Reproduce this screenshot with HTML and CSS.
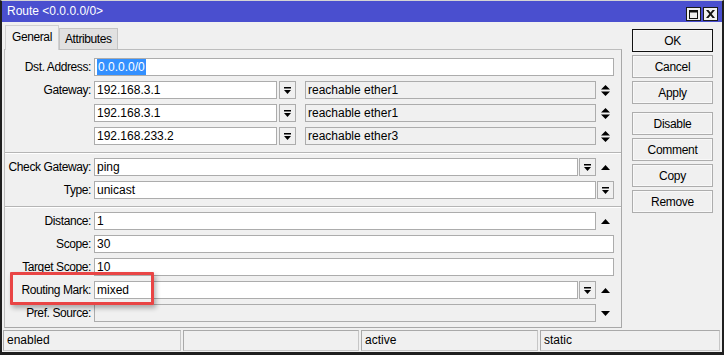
FILE: index.html
```html
<!DOCTYPE html>
<html lang="en">

<head>
    <meta charset="UTF-8">
    <meta name="viewport" content="width=device-width, initial-scale=1.0">
    <title>Route &lt;0.0.0.0/0&gt;</title>
    <link rel="stylesheet" href="styles.css">
</head>

<body>
    <div class="window">
        <!-- title bar -->
        <div class="titlebar">
            <span class="title">Route &lt;0.0.0.0/0&gt;</span>
            <div class="title-buttons">
                <span class="tbtn">
                    <svg width="9" height="9" viewBox="0 0 9 9"><path d="M0 0h9v9H0z M1 2.5v5.5h7V2.5z" fill-rule="evenodd" /></svg>
                </span>
                <span class="tbtn">
                    <svg width="9" height="8" viewBox="0 0 9 8"><path d="M0 0h2.4l2.1 2.6L6.6 0H9L5.7 4 9 8H6.6L4.5 5.4 2.4 8H0l3.3-4z" /></svg>
                </span>
            </div>
        </div>

        <div class="main">
            <div class="tabarea">
                <div class="tabs">
                    <div class="tab active">General</div>
                    <div class="tab">Attributes</div>
                </div>

                <div class="panel">
                    <!-- address / gateways -->
                    <div class="section">
                        <div class="row">
                            <span class="lbl">Dst. Address:</span>
                            <div class="field">
                                <div class="input"><span class="sel">0.0.0.0/0</span></div>
                            </div>
                        </div>
                        <div class="row">
                            <span class="lbl">Gateway:</span>
                            <div class="field">
                                <div class="input gw">192.168.3.1</div>
                                <span class="dd gw-dd"><svg width="7" height="7" viewBox="0 0 7 7"><rect width="7" height="1.5" /><path d="M0 3h7L3.5 7z" /></svg></span>
                                <div class="input readonly state">reachable ether1</div>
                                <span class="spin"><svg width="9" height="11" viewBox="0 0 9 11"><path d="M4.5 0L9 4.5H0z M0 6.5h9L4.5 11z" /></svg></span>
                            </div>
                        </div>
                        <div class="row">
                            <span class="lbl"></span>
                            <div class="field">
                                <div class="input gw">192.168.3.1</div>
                                <span class="dd gw-dd"><svg width="7" height="7" viewBox="0 0 7 7"><rect width="7" height="1.5" /><path d="M0 3h7L3.5 7z" /></svg></span>
                                <div class="input readonly state">reachable ether1</div>
                                <span class="spin"><svg width="9" height="11" viewBox="0 0 9 11"><path d="M4.5 0L9 4.5H0z M0 6.5h9L4.5 11z" /></svg></span>
                            </div>
                        </div>
                        <div class="row">
                            <span class="lbl"></span>
                            <div class="field">
                                <div class="input gw">192.168.233.2</div>
                                <span class="dd gw-dd"><svg width="7" height="7" viewBox="0 0 7 7"><rect width="7" height="1.5" /><path d="M0 3h7L3.5 7z" /></svg></span>
                                <div class="input readonly state">reachable ether3</div>
                                <span class="spin"><svg width="9" height="11" viewBox="0 0 9 11"><path d="M4.5 0L9 4.5H0z M0 6.5h9L4.5 11z" /></svg></span>
                            </div>
                        </div>
                    </div>

                    <div class="sep"></div>

                    <!-- check gateway / type -->
                    <div class="section">
                        <div class="row">
                            <span class="lbl">Check Gateway:</span>
                            <div class="field">
                                <div class="input">ping</div>
                                <span class="dd"><svg width="7" height="7" viewBox="0 0 7 7"><rect width="7" height="1.5" /><path d="M0 3h7L3.5 7z" /></svg></span>
                                <span class="spin"><svg width="9" height="5" viewBox="0 0 9 5"><path d="M4.5 0L9 5H0z" /></svg></span>
                            </div>
                        </div>
                        <div class="row">
                            <span class="lbl">Type:</span>
                            <div class="field">
                                <div class="input">unicast</div>
                                <span class="dd"><svg width="7" height="7" viewBox="0 0 7 7"><rect width="7" height="1.5" /><path d="M0 3h7L3.5 7z" /></svg></span>
                            </div>
                        </div>
                    </div>

                    <div class="sep"></div>

                    <!-- distance / scope / marks -->
                    <div class="section">
                        <div class="row">
                            <span class="lbl">Distance:</span>
                            <div class="field">
                                <div class="input">1</div>
                                <span class="spin"><svg width="9" height="5" viewBox="0 0 9 5"><path d="M4.5 0L9 5H0z" /></svg></span>
                            </div>
                        </div>
                        <div class="row">
                            <span class="lbl">Scope:</span>
                            <div class="field">
                                <div class="input">30</div>
                            </div>
                        </div>
                        <div class="row">
                            <span class="lbl">Target Scope:</span>
                            <div class="field">
                                <div class="input">10</div>
                            </div>
                        </div>
                        <div class="row">
                            <span class="lbl">Routing Mark:</span>
                            <div class="field">
                                <div class="input">mixed</div>
                                <span class="dd"><svg width="7" height="7" viewBox="0 0 7 7"><rect width="7" height="1.5" /><path d="M0 3h7L3.5 7z" /></svg></span>
                                <span class="spin"><svg width="9" height="5" viewBox="0 0 9 5"><path d="M4.5 0L9 5H0z" /></svg></span>
                            </div>
                        </div>
                        <div class="row">
                            <span class="lbl">Pref. Source:</span>
                            <div class="field">
                                <div class="input readonly"></div>
                                <span class="spin"><svg width="9" height="5" viewBox="0 0 9 5"><path d="M0 0h9L4.5 5z" /></svg></span>
                            </div>
                        </div>
                    </div>
                </div>
            </div>

            <!-- action buttons -->
            <div class="actions">
                <button class="btn default">OK</button>
                <button class="btn">Cancel</button>
                <button class="btn">Apply</button>
                <button class="btn spaced">Disable</button>
                <button class="btn">Comment</button>
                <button class="btn">Copy</button>
                <button class="btn">Remove</button>
            </div>
        </div>

        <!-- status bar -->
        <div class="statusbar">
            <div class="cell">enabled</div>
            <div class="cell"></div>
            <div class="cell">active</div>
            <div class="cell">static</div>
        </div>

        <div class="highlight"></div>
    </div>
</body>

</html>
```

FILE: styles.css
```css
/* page */
body {
    margin: 0;
    background-color: #f0f0f0;
    font-family: "Liberation Sans", Arial, sans-serif;
    font-size: 12px;
    color: #000;
}

.window {
    position: relative;
    width: 724px;
    height: 355px;
    box-sizing: border-box;
    border-style: solid;
    border-color: #1f1f1f;
    border-width: 1px 2px 3px 2px;
    border-top-color: #d4d4d4;
    background-color: #f0f0f0;
    overflow: hidden;
}

/* title bar */
.titlebar {
    height: 21px;
    background-color: #4a4fcf;
    color: #fff;
    display: flex;
    justify-content: space-between;
    padding: 0 4px 0 5px;
}

.title {
    line-height: 21px;
    font-size: 12px;
}

.title-buttons {
    display: flex;
    gap: 2px;
    padding-top: 6px;
}

.tbtn {
    width: 15px;
    height: 14px;
    box-sizing: border-box;
    border: 1px solid #1a1a1a;
    background-color: #f0f0f0;
    display: flex;
    align-items: center;
    justify-content: center;
}

.tbtn svg {
    fill: #111;
}

/* main area */
.main {
    display: flex;
    padding: 3px 0 0 2px;
}

.tabarea {
    width: 618px;
}

.tabs {
    display: flex;
    align-items: flex-end;
    height: 24px;
}

.tab {
    position: relative;
    box-sizing: border-box;
    height: 21px;
    padding: 0 5px;
    line-height: 20px;
    letter-spacing: -0.4px;
    border: 1px solid #c4c4c4;
    border-bottom: none;
    background-color: #e1e1e1;
}

.tab.active {
    z-index: 1;
    height: 25px;
    margin-bottom: -1px;
    margin-left: 1px;
    padding: 0 6px;
    line-height: 22px;
    background-color: #f0f0f0;
    border-color: #d0d0d0;
}

.panel {
    border: 1px solid #bdbdbd;
    border-right-color: #a8a8a8;
    border-bottom-color: #a8a8a8;
    padding: 8px 0 5px 0;
}

.section {
    display: flex;
    flex-direction: column;
    gap: 5px;
}

.sep {
    margin: 7px 0 4px;
    height: 0;
    border-top: 1px solid #b5b5b5;
    border-bottom: 1px solid #fff;
}

.row {
    display: flex;
    align-items: center;
    height: 18px;
    padding-right: 7px;
}

.lbl {
    width: 86px;
    flex-shrink: 0;
    text-align: right;
    padding-right: 3px;
    letter-spacing: -0.4px;
    white-space: nowrap;
}

.field {
    flex: 1;
    display: flex;
    align-items: center;
    height: 18px;
}

.input {
    flex: 1;
    height: 18px;
    box-sizing: border-box;
    border: 1px solid #acacac;
    background-color: #fff;
    padding: 0 2px;
    line-height: 16px;
    white-space: nowrap;
    overflow: hidden;
}

.input.readonly {
    background-color: #f0f0f0;
}

.input.gw {
    flex: none;
    width: 183px;
}

.input.state {
    margin-left: 9px;
}

.sel {
    background-color: #3390ff;
    color: #fff;
    padding: 1px 1px;
}

.dd {
    width: 17px;
    height: 18px;
    box-sizing: border-box;
    margin-left: 1px;
    border: 1px solid #acacac;
    background-color: #f0f0f0;
    display: flex;
    align-items: center;
    justify-content: center;
    flex-shrink: 0;
}

.dd.gw-dd {
    margin-left: 2px;
}

.dd svg,
.spin svg {
    fill: #000;
}

.spin {
    width: 18px;
    flex-shrink: 0;
    display: flex;
    align-items: center;
    justify-content: center;
}

/* buttons on the right */
.actions {
    width: 81px;
    margin-left: 10px;
    padding-top: 4px;
    display: flex;
    flex-direction: column;
    gap: 3px;
}

.btn {
    height: 23px;
    padding: 0;
    border: 1px solid #adadad;
    background-color: #f0f0f0;
    font-family: "Liberation Sans", Arial, sans-serif;
    font-size: 12px;
    letter-spacing: -0.3px;
    color: #000;
    box-shadow: inset 0 0 0 1px #f8f8f8;
}

.btn.default {
    border: 1px solid #111;
    box-shadow: inset 0 0 0 1px #f5f5f5;
}

.btn.spaced {
    margin-top: 5px;
}

/* status bar */
.statusbar {
    display: grid;
    grid-template-columns: 178px 176px 177px 1fr;
    gap: 2px;
    margin: 2px 2px 0 1px;
    height: 21px;
}

.cell {
    box-sizing: border-box;
    border: 1px solid #c6c6c6;
    border-top-color: #a9a9a9;
    border-left-color: #a9a9a9;
    padding: 0 3px;
    line-height: 19px;
}

/* red marker drawn over the form */
.highlight {
    position: absolute;
    left: 8px;
    top: 271px;
    width: 144px;
    height: 33px;
    box-sizing: border-box;
    border: 3px solid #e94545;
    border-radius: 1px;
    box-shadow: 2px 3px 5px rgba(0, 0, 0, 0.3);
}
```
